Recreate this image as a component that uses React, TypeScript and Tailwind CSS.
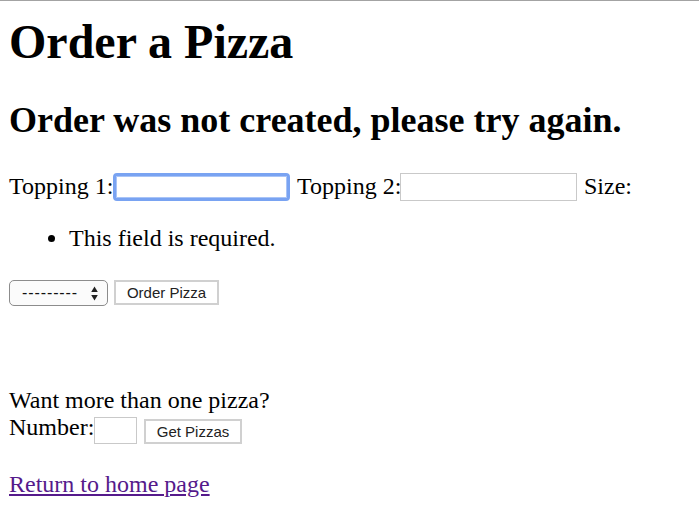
export default function App() {
  return (
    <div className="w-[699px] h-[510px] bg-white border-t border-[#a3a3a3] overflow-hidden font-['Liberation_Serif',serif] text-black">
      <div className="px-[9px]">
        {/* Title */}
        <h1 className="mt-[13px] text-[48px] leading-[55px] font-bold">Order a Pizza</h1>
        <h2 className="mt-[31px] text-[36px] leading-[41px] font-bold">
          Order was not created, please try again.
        </h2>

        {/* Pizza form */}
        <div className="mt-[32px] flex items-start text-[24px] leading-[27px] whitespace-nowrap">
          <span className="w-[104px]">Topping 1:</span>
          <input
            type="text"
            className="w-[177px] h-[28px] rounded-[4px] border-[3px] border-[#79a3f2] bg-white shadow-[0_0_0_1px_#a9c4f7_inset] outline-none"
          />
          <span className="ml-[7px] w-[103px]">Topping 2:</span>
          <input
            type="text"
            className="w-[177px] h-[28px] border border-[#c9c9c9] bg-white outline-none"
          />
          <span className="ml-[7px]">Size:</span>
        </div>

        <ul className="mt-[24px] pl-[60px] list-disc text-[24px] leading-[27px]">
          <li>This field is required.</li>
        </ul>

        <div className="mt-[28px] flex items-start gap-[6px] font-['Liberation_Sans',sans-serif] text-[15px]">
          <div className="w-[99px] h-[26px] rounded-[5px] border border-[#8c8c8c] bg-[#fbfbfb] flex items-center pl-[12px] pr-[9px] justify-between text-[#111]">
            <span className="text-[16px] tracking-[0.9px]">---------</span>
            <svg width="7" height="15" viewBox="0 0 7 15">
              <path d="M3.5 0.5 L6.8 6 L0.2 6 Z" fill="#222" />
              <path d="M3.5 14.5 L6.8 9 L0.2 9 Z" fill="#222" />
            </svg>
          </div>
          <button className="w-[105px] h-[25px] border-2 border-[#d0d0d0] bg-white text-[#222] leading-none">
            Order Pizza
          </button>
        </div>

        {/* Multiple pizzas */}
        <div className="mt-[81px] text-[24px] leading-[27px]">Want more than one pizza?</div>
        <div className="flex items-start text-[24px] leading-[27px] whitespace-nowrap">
          <span className="w-[85px]">Number:</span>
          <input
            type="number"
            className="mt-[3px] w-[43px] h-[27px] border border-[#c9c9c9] bg-white outline-none"
          />
          <button className="ml-[7px] mt-[5px] w-[98px] h-[25px] border-2 border-[#d0d0d0] bg-white text-[#222] font-['Liberation_Sans',sans-serif] text-[15px] leading-none">
            Get Pizzas
          </button>
        </div>

        <div className="mt-[27px] text-[24px] leading-[27px]">
          <a href="#" className="text-[#551a8b] underline">
            Return to home page
          </a>
        </div>
      </div>
    </div>
  );
}
